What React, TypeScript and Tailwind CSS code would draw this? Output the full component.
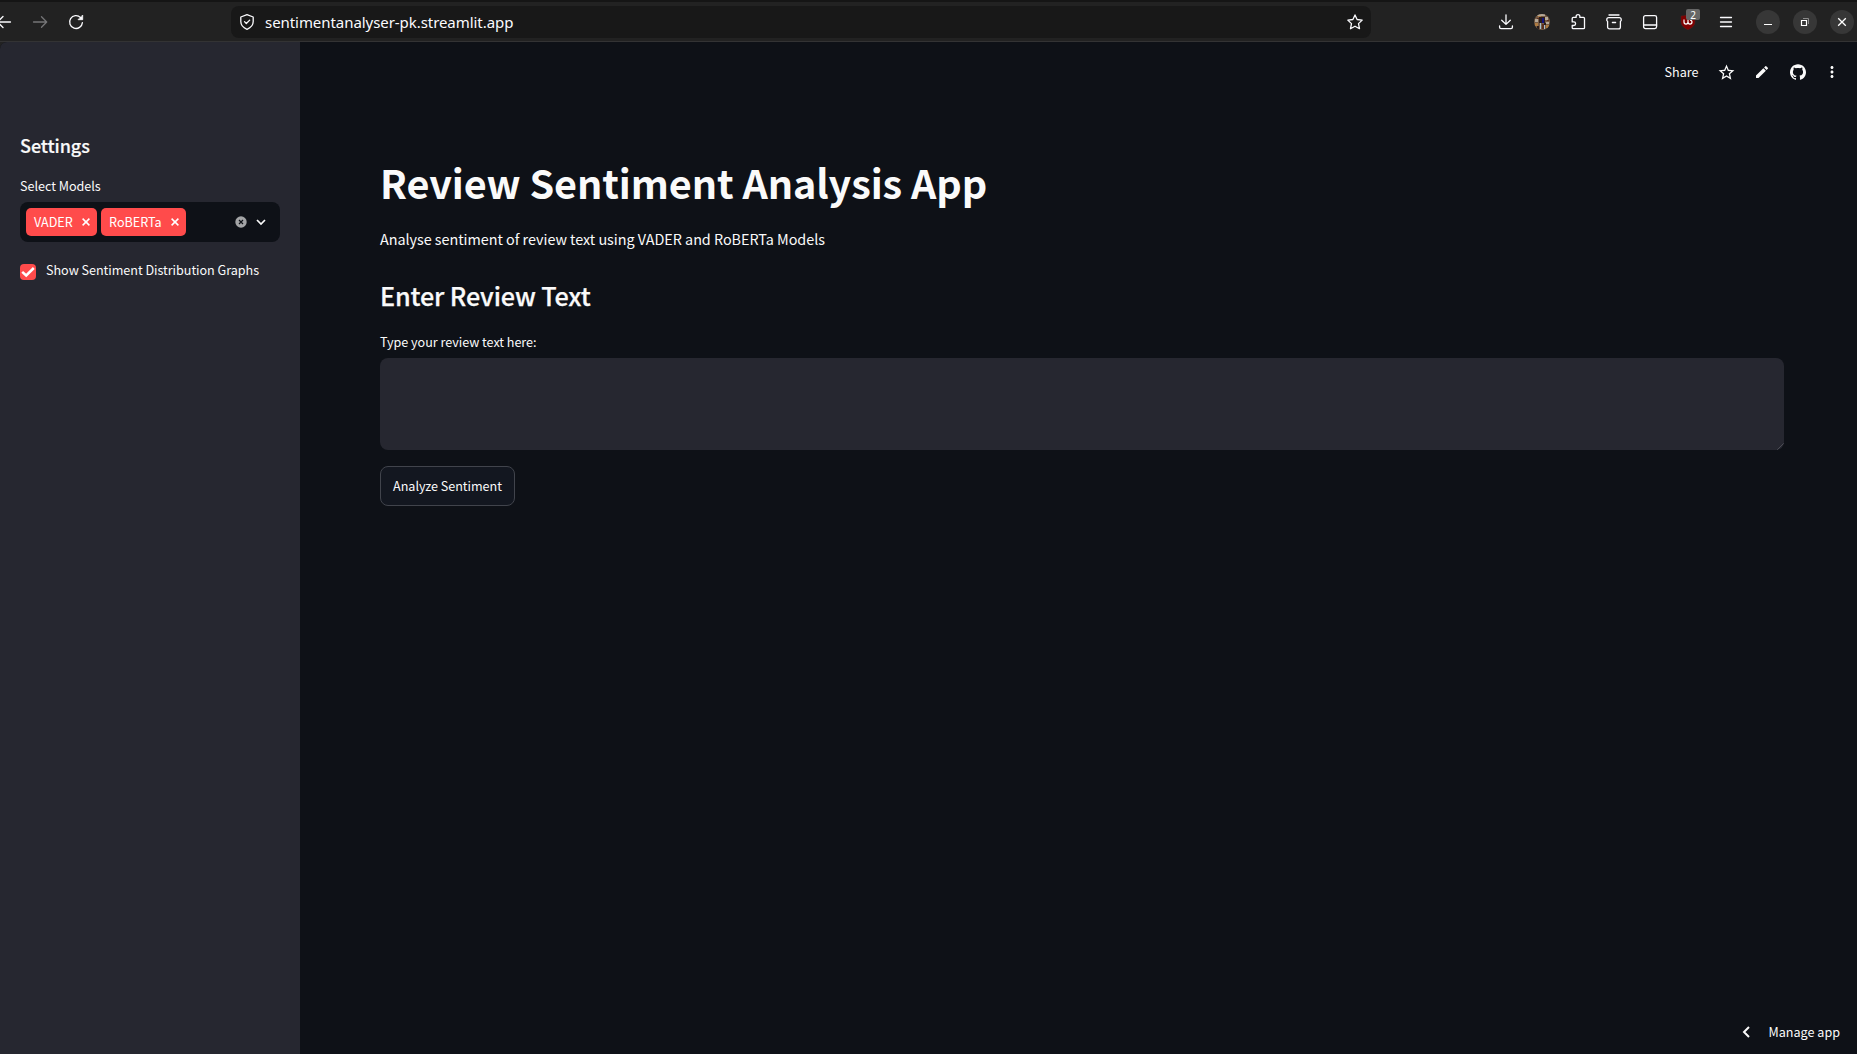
import type { ReactNode } from 'react';
import { SiGithub } from 'react-icons/si';
import { MdEdit, MdMoreVert, MdStarBorder } from 'react-icons/md';

interface IconProps {
  children: ReactNode;
  className?: string;
}

/** 16px toolbar glyph, stroked with the current colour */
function ToolbarIcon({ children, className = '' }: IconProps) {
  return (
    <svg
      viewBox="0 0 16 16"
      className={`size-4 shrink-0 overflow-visible ${className}`}
      fill="none"
      stroke="currentColor"
      strokeWidth={1.3}
      strokeLinecap="round"
      strokeLinejoin="round"
    >
      {children}
    </svg>
  );
}

function WindowButton({ children }: { children: ReactNode }) {
  return (
    <button className="flex size-6 items-center justify-center rounded-full bg-[#373737] text-white">
      <svg viewBox="0 0 12 12" className="size-3" fill="none" stroke="currentColor" strokeWidth={1}>
        {children}
      </svg>
    </button>
  );
}

function BrowserBar() {
  return (
    <header className="flex h-[42px] shrink-0 items-center border-t-2 border-b border-t-[#151515] border-b-[#333334] bg-[#222222] pt-px text-[#fbfbfe]">
      <div className="flex w-[231px] shrink-0 items-center">
        <ToolbarIcon className="-ml-[4px]">
          <path d="M14.5 8H1.5M7 2.5 1.5 8 7 13.5" />
        </ToolbarIcon>
        <ToolbarIcon className="ml-5 text-[#757577]">
          <path d="M1.5 8h13M9.5 2.8 14.7 8l-5.2 5.2" />
        </ToolbarIcon>
        <ToolbarIcon className="ml-5">
          <path d="M14.4 8.6A6.4 6.4 0 1 1 12.6 3.6" />
          <path d="M14.7 1.4v4.3h-4.3z" fill="currentColor" strokeWidth={0.8} />
        </ToolbarIcon>
      </div>

      <div className="flex h-8 w-[1140px] shrink-0 items-center rounded-lg bg-[#181818] pr-2 pl-2">
        <ToolbarIcon>
          <path d="M8 .7 14.2 3v4.6c0 3.4-2.5 6.2-6.2 7.7-3.7-1.5-6.2-4.3-6.2-7.7V3z" />
          <path d="M5.5 7.6 7.3 9.5l3.4-3.4" />
        </ToolbarIcon>
        <span className="ml-[10px] font-['Noto_Sans','Open_Sans',sans-serif] text-[15px] leading-5 tracking-[-0.06px]">
          sentimentanalyser-pk.streamlit.app
        </span>
        <ToolbarIcon className="ml-auto">
          <path d="m8 .9 2.1 4.6 5.1.6-3.7 3.5 1 5.1L8 12.2l-4.5 2.5 1-5.1L.8 6.1l5.1-.6z" />
        </ToolbarIcon>
      </div>

      <div className="flex flex-1 items-center pl-[127px]">
        <ToolbarIcon className="-ml-[0.5px]">
          <path d="M8 .8v9.4M3.7 6.2 8 10.4l4.3-4.2M1.6 12v1.3c0 .8.6 1.4 1.4 1.4h10c.8 0 1.4-.6 1.4-1.4V12" />
        </ToolbarIcon>
        {/* extension avatar */}
        <svg viewBox="0 0 16 16" className="ml-[20.5px] size-4 shrink-0">
          <clipPath id="avatar">
            <circle cx="8" cy="8" r="8" />
          </clipPath>
          <g clipPath="url(#avatar)">
            <path d="M0 0h16v16H0z" fill="#765c46" />
            <path d="M3 0h8v2H3zM11 3h3v3h-3zM1 5h3v3H1zM12 8h3v2h-3z" fill="#b5a999" />
            <path d="M1 9h3v3H1zM12 11h3v3h-3zM4 2h3v1H4z" fill="#b07c42" />
            <path d="M5 3h6v6H5zM3 12h2v3H3zM10 9h2v2h-2z" fill="#2a1d1c" />
            <path d="M8 4h2v5H8z" fill="#14147e" />
            <path d="M6 9h1v6H6zM10 11h1v4h-1z" fill="#a9c0cf" />
            <path d="M8 10h2v5H8zM3 4h2v1H3zM13 6h2v1h-2z" fill="#5b3020" />
          </g>
        </svg>
        <ToolbarIcon className="ml-5">
          <path d="M2.2 6V4.4c0-.6.4-1 1-1h2.9V2.6a1.9 1.9 0 0 1 3.8 0v.8h3.6c.6 0 1 .4 1 1v9.3c0 .6-.4 1-1 1H3.2c-.6 0-1-.4-1-1v-2.2h1.6a1.8 1.8 0 0 0 0-3.6H2.2z" />
        </ToolbarIcon>
        <ToolbarIcon className="ml-5">
          <path d="M3 1h10M1.6 7.400.8 6.600V5.500c0-1.100.8-1.900 1.900-1.900h10.600c1.100 0 1.900.8 1.900 1.900v1.100l-.8.8v5.500c0 1.100-.8 1.900-1.900 1.900h-9c-1.100 0-1.900-.8-1.900-1.900zM6.400 8.500h3.200" />
        </ToolbarIcon>
        <ToolbarIcon className="ml-5">
          <rect x="1.6" y="1.6" width="13" height="13" rx="1.8" />
          <path d="M1.6 11h13" />
        </ToolbarIcon>
        <div className="relative ml-[22px] size-4 shrink-0">
          <svg viewBox="0 0 16 16" className="size-4">
            <path d="M8 .3c2 1.200 4 1.600 7 1.700v5.500c0 4-3 6.500-7 8.300-4-1.800-7-4.300-7-8.300V2c3-.1 5-.5 7-1.700z" fill="#800000" stroke="#5a2020" strokeWidth=".5" />
            <path d="M4 5.500v2.600a2 2 0 0 0 4 0V5.500v2.600a2 2 0 1 0 2-2" fill="none" stroke="#fff" strokeWidth="1.200" />
          </svg>
          <span className="absolute -top-[5px] left-[6px] flex h-[11px] w-[14px] items-center justify-center rounded-[2px] bg-[#666666] font-['Noto_Sans',sans-serif] text-[10px] leading-none text-white">
            2
          </span>
        </div>
        <ToolbarIcon className="ml-[22px]">
          <path d="M2.500 3.500h11M2.500 8h11M2.500 12.500h11" />
        </ToolbarIcon>
        <div className="ml-[22px] flex gap-[13px]">
          <WindowButton>
            <path d="M2 8.500h8" />
          </WindowButton>
          <WindowButton>
            <path d="M2.500 4.500h5v5h-5z" strokeWidth={1.2} />
            <path d="M4 2.500h5.500V8" stroke="#8b8b8b" />
          </WindowButton>
          <WindowButton>
            <path d="m2.200 2.200 7.600 7.600M9.800 2.200 2.200 9.800" strokeWidth={1.3} />
          </WindowButton>
        </div>
      </div>
    </header>
  );
}

function Tag({ label }: { label: string }) {
  return (
    <span className="flex h-7 items-center rounded-[5px] bg-[#ff4b4b] pr-[7px] pl-2 text-[12.6px] leading-5 tracking-[-0.02px] text-white">
      {label}
      <svg viewBox="0 0 8 8" className="ml-[9.4px] size-2" stroke="currentColor" strokeWidth={1.5}>
        <path d="m.6.6 6.800 6.800M7.400.6.6 7.400" />
      </svg>
    </span>
  );
}

const MODELS = ['VADER', 'RoBERTa'];

function Sidebar() {
  return (
    <aside className="w-[300px] shrink-0 bg-[#262730] px-5 pt-[91px]">
      <h2 className="text-[18px] leading-6 font-medium tracking-[-0.06px] [-webkit-text-stroke:0.2px]">Settings</h2>
      <p className="mt-[19px] text-[12.6px] leading-5 tracking-[-0.03px]">Select Models</p>
      <div className="mt-[6px] flex h-10 items-center gap-1 rounded-lg bg-[#0e1117] px-[6px]">
        {MODELS.map((model) => (
          <Tag key={model} label={model} />
        ))}
        <svg viewBox="0 0 12 12" className="ml-auto size-3">
          <circle cx="6" cy="6" r="5.700" fill="#a3a4a6" />
          <path d="m4 4 4 4M8 4 4 8" stroke="#0e1117" strokeWidth={1.2} />
        </svg>
        <svg viewBox="0 0 10 10" className="mr-[8px] ml-[5.5px] size-[10px]" fill="none" stroke="#fafafa" strokeWidth={1.7}>
          <path d="M1 3l4 4 4-4" />
        </svg>
      </div>
      <label className="mt-[18px] flex text-[12.6px] leading-5 tracking-[-0.035px]">
        <span className="mt-1 mr-[10px] flex size-4 items-center justify-center rounded-[4px] bg-[#ff4b4b]">
          <svg viewBox="0 0 16 16" className="size-4" fill="none" stroke="#fff" strokeWidth={2.5}>
            <path d="M2.200 7.800 6.200 11.500 13.800 4" />
          </svg>
        </span>
        Show Sentiment Distribution Graphs
      </label>
    </aside>
  );
}

function AppToolbar() {
  return (
    <div className="flex h-[60px] items-center justify-end pr-[16px]">
      <span className="mr-[18px] text-[12.6px] leading-5">Share</span>
      <MdStarBorder className="mr-[18.500px] size-[19px]" />
      <MdEdit className="mr-[20px] size-4" />
      <SiGithub className="mr-[17px] size-4" />
      <MdMoreVert className="size-[18px]" />
    </div>
  );
}

export default function App() {
  return (
    <div className="flex h-[1054px] w-[1857px] flex-col overflow-hidden bg-[#222222] font-['Noto_Sans_CJK_SC',sans-serif] text-[#fafafa]">
      <BrowserBar />
      <div className="flex flex-1 overflow-hidden rounded-tl-[7px] bg-[#0e1117]">
        <Sidebar />
        <main className="flex flex-1 flex-col">
          <AppToolbar />
          <section className="flex-1 pt-[53px] pr-[73px] pl-20">
            <h1 className="text-[39.6px] leading-[53px] font-bold tracking-[-0.1px]">Review Sentiment Analysis App</h1>
            <p className="mt-[18px] text-[14.4px] leading-[26px] tracking-[-0.036px]">
              Analyse sentiment of review text using VADER and RoBERTa Models
            </p>
            <h2 className="mt-[26px] text-[25.2px] leading-[34px] font-medium tracking-[-0.13px] [-webkit-text-stroke:0.25px]">
              Enter Review Text
            </h2>
            <p className="mt-[20px] text-[12.6px] leading-5 tracking-[-0.03px]">Type your review text here:</p>
            <div className="mt-[6px] flex h-[92px] items-end justify-end overflow-hidden rounded-lg bg-[#262730]">
              <svg viewBox="0 0 8 8" className="size-2" stroke="#55565e" strokeWidth={0.8}>
                <path d="M1 8 8 1M4 8l4-4" />
              </svg>
            </div>
            <button className="mt-4 flex h-10 w-[135px] items-center justify-center rounded-lg border border-[#41444c] bg-[#131720] text-[12.6px] leading-5 tracking-[-0.03px]">
              Analyze Sentiment
            </button>
          </section>
          <footer className="flex h-[44px] items-center justify-end pr-[17px] text-[12.6px] leading-5">
            <svg viewBox="0 0 8 12" className="mr-[18px] h-3 w-2" fill="none" stroke="currentColor" strokeWidth={2}>
              <path d="M7 1 2 6l5 5" />
            </svg>
            Manage app
          </footer>
        </main>
      </div>
    </div>
  );
}
